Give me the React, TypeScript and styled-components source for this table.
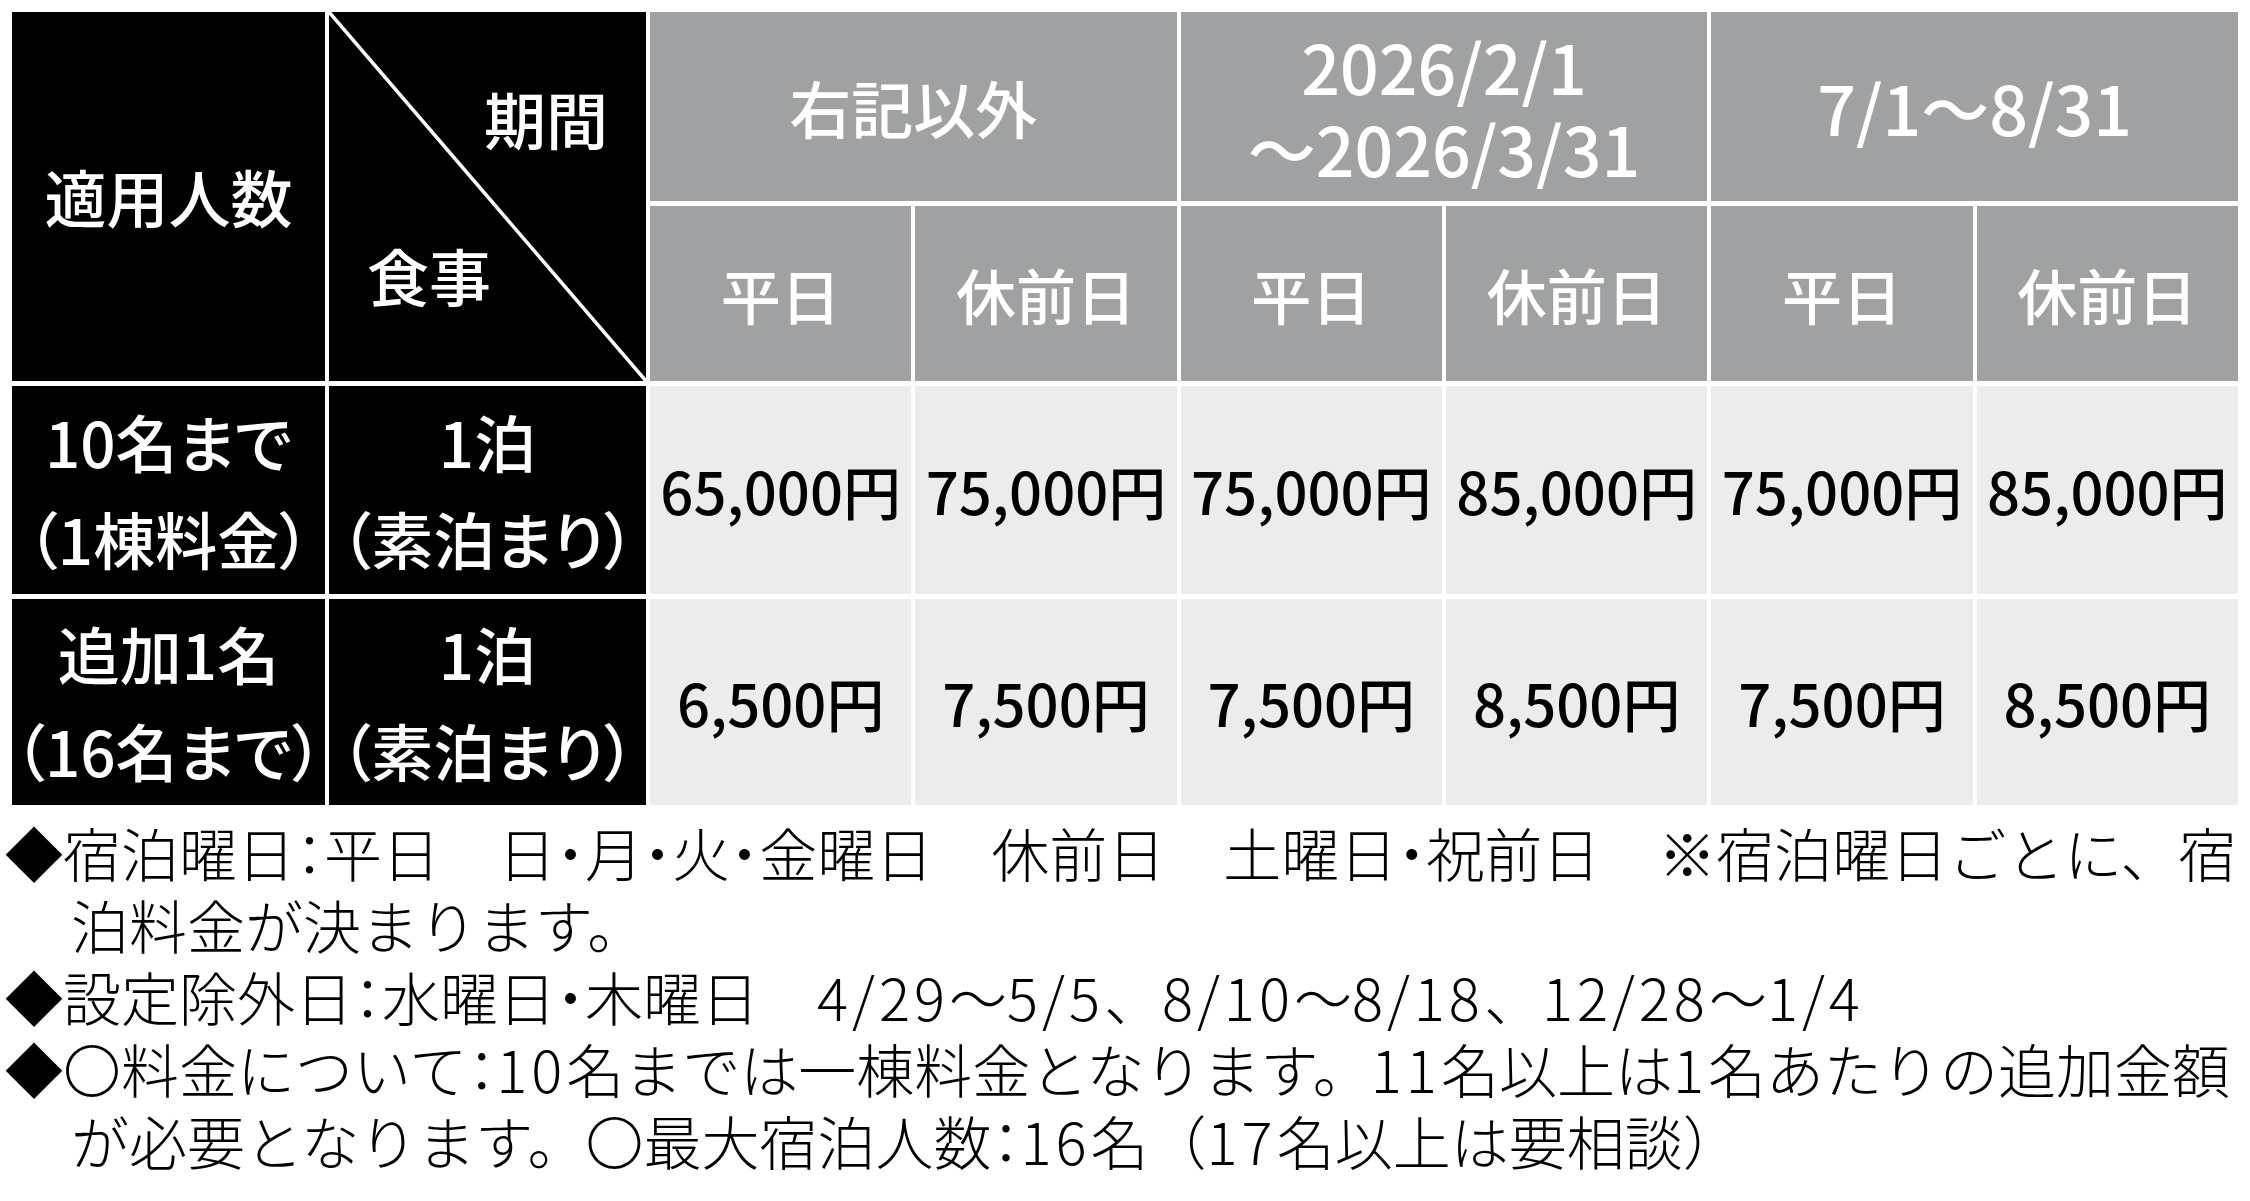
import React from "react";
import styled, { createGlobalStyle } from "styled-components";

const Global = createGlobalStyle`
  html, body {
    margin: 0;
    padding: 0;
    background: #ffffff;
  }
  body {
    font-family: "Noto Sans CJK JP", "Noto Sans", sans-serif;
    color: #000000;
  }
`;

const Page = styled.div`
  width: 2250px;
  box-sizing: border-box;
  padding: 12px 12px 0 5px;
`;

const PriceGrid = styled.div`
  margin-left: 7px;
  display: grid;
  grid-template-columns: 313px 317px repeat(6, 1fr);
  grid-template-rows: 189px 175px 208px 206px;
  column-gap: 4px;
  row-gap: 5px;
  background: #ffffff;
  font-feature-settings: "palt";
`;

const BaseCell = styled.div`
  display: flex;
  align-items: center;
  justify-content: center;
  text-align: center;
  box-sizing: border-box;
`;

const LabelCell = styled(BaseCell)<{ $rows?: string }>`
  background: #000000;
  color: #ffffff;
  font-size: 62px;
  font-weight: 500;
  line-height: 97px;
  grid-row: ${(p) => p.$rows ?? "auto"};
`;

const CornerCell = styled.div`
  grid-row: 1 / 3;
  grid-column: 2;
  position: relative;
  background: #000000;
  color: #ffffff;
  font-size: 62px;
  font-weight: 500;
  line-height: 74px;
  display: flex;
  flex-direction: column;
  justify-content: space-between;
  padding: 69px 38px;
  box-sizing: border-box;
`;

const Diagonal = styled.svg`
  position: absolute;
  inset: 0;
  width: 100%;
  height: 100%;
`;

const CornerTop = styled.span`
  position: relative;
  align-self: flex-end;
`;

const CornerBottom = styled.span`
  position: relative;
  align-self: flex-start;
`;

const PeriodCell = styled(BaseCell)<{ $cols: string; $small?: boolean }>`
  grid-column: ${(p) => p.$cols};
  background: #a0a1a3;
  color: #ffffff;
  font-size: ${(p) => (p.$small ? "68px" : "62px")};
  font-weight: 500;
  line-height: 82px;
`;

const DayCell = styled(BaseCell)`
  background: #a0a1a3;
  color: #ffffff;
  font-size: 60px;
  font-weight: 500;
`;

const PriceCell = styled(BaseCell)`
  background: #ececec;
  color: #000000;
  font-size: 58px;
  font-weight: 500;
`;

const Notes = styled.div`
  margin-top: 11px;
  font-size: 58px;
  font-weight: 300;
  line-height: 72px;
  white-space: nowrap;
`;

const Note = styled.div`
  padding-left: 66px;
  text-indent: -66px;
`;

const Narrow = styled.span`
  font-feature-settings: "halt";
`;

const Figures = styled.span`
  letter-spacing: 4px;
`;

const periods = [
  { cols: "3 / 5", label: ["右記以外"], small: false },
  { cols: "5 / 7", label: ["2026/2/1", "～2026/3/31"], small: true },
  { cols: "7 / 9", label: ["7/1～8/31"], small: true },
];

const days = ["平日", "休前日", "平日", "休前日", "平日", "休前日"];

const rows = [
  {
    who: ["10名まで", "（1棟料金）"],
    meal: ["1泊", "（素泊まり）"],
    prices: ["65,000円", "75,000円", "75,000円", "85,000円", "75,000円", "85,000円"],
  },
  {
    who: ["追加1名", "（16名まで）"],
    meal: ["1泊", "（素泊まり）"],
    prices: ["6,500円", "7,500円", "7,500円", "8,500円", "7,500円", "8,500円"],
  },
];

const notes = [
  [
    "◆宿泊曜日：平日　日・月・火・金曜日　休前日　土曜日・祝前日　※宿泊曜日ごとに、宿",
    "泊料金が決まります。",
  ],
  ["◆設定除外日：水曜日・木曜日　4/29～5/5、8/10～8/18、12/28～1/4"],
  [
    "◆〇料金について：10名までは一棟料金となります。11名以上は1名あたりの追加金額",
    "が必要となります。〇最大宿泊人数：16名（17名以上は要相談）",
  ],
];

const Lines = ({ lines }: { lines: string[] }) => (
  <span>
    {lines.map((l, i) => (
      <React.Fragment key={i}>
        {i > 0 && <br />}
        {l}
      </React.Fragment>
    ))}
  </span>
);

const NoteLine = ({ text }: { text: string }) => (
  <>
    {text.split(/([：・]|[0-9/]+)/).map((part, i) => {
      if (part === "：" || part === "・") return <Narrow key={i}>{part}</Narrow>;
      if (/^[0-9/]+$/.test(part)) return <Figures key={i}>{part}</Figures>;
      return <React.Fragment key={i}>{part}</React.Fragment>;
    })}
  </>
);

export default function App() {
  return (
    <>
      <Global />
      <Page>
        <PriceGrid>
          <LabelCell $rows="1 / 3">適用人数</LabelCell>
          <CornerCell>
            <Diagonal viewBox="0 0 100 100" preserveAspectRatio="none">
              <line
                x1="0"
                y1="0"
                x2="100"
                y2="100"
                stroke="#ffffff"
                strokeWidth="3.5"
                vectorEffect="non-scaling-stroke"
              />
            </Diagonal>
            <CornerTop>期間</CornerTop>
            <CornerBottom>食事</CornerBottom>
          </CornerCell>
          {periods.map((p) => (
            <PeriodCell key={p.cols} $cols={p.cols} $small={p.small}>
              <Lines lines={p.label} />
            </PeriodCell>
          ))}
          {days.map((d, i) => (
            <DayCell key={i}>{d}</DayCell>
          ))}
          {rows.map((r, ri) => (
            <React.Fragment key={ri}>
              <LabelCell>
                <Lines lines={r.who} />
              </LabelCell>
              <LabelCell>
                <Lines lines={r.meal} />
              </LabelCell>
              {r.prices.map((pr, pi) => (
                <PriceCell key={pi}>{pr}</PriceCell>
              ))}
            </React.Fragment>
          ))}
        </PriceGrid>
        <Notes>
          {notes.map((n, i) => (
            <Note key={i}>
              {n.map((line, li) => (
                <React.Fragment key={li}>
                  {li > 0 && <br />}
                  <NoteLine text={line} />
                </React.Fragment>
              ))}
            </Note>
          ))}
        </Notes>
      </Page>
    </>
  );
}
